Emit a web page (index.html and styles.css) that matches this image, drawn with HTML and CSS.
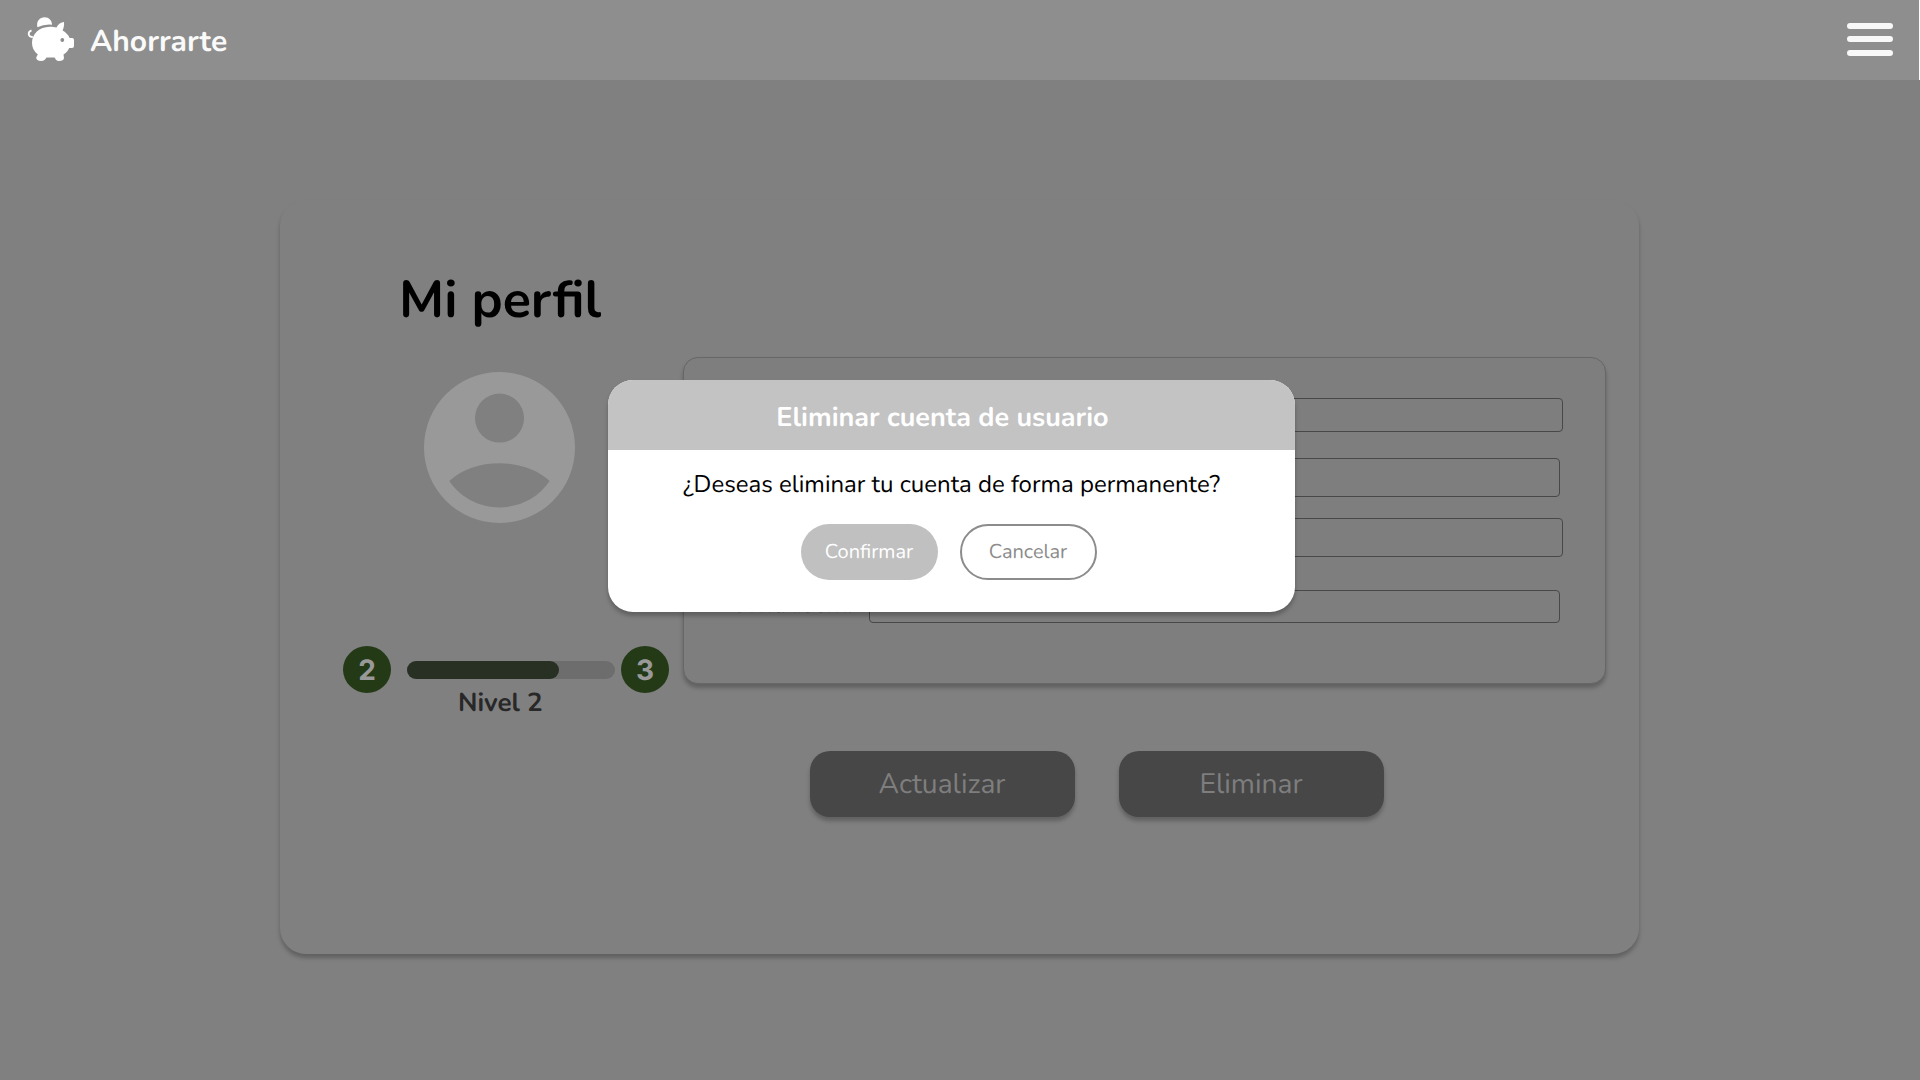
FILE: index.html
```html
<!DOCTYPE html>
<html lang="es">
<head>
<meta charset="utf-8">
<title>Ahorrarte</title>
<link rel="stylesheet" href="styles.css">
</head>
<body>
<header class="topbar">
  <div class="brand">
    <svg class="pig" viewBox="0 0 64 60" width="64" height="60" aria-hidden="true">
      <g fill="#fff">
        <path d="M17.400 17.200C16 11 20 7.300 24.500 7.300C29 7.300 32 10.500 32 14.700Q24 14 17.400 17.200Z"/>
        <path d="M12 33C12 24 19 17 30 16.800C32.500 16.800 34.500 17 36.500 17.600C38 14 41 12.200 44 12C44.400 15 43.600 18.500 42.600 20.500C46 22.500 48.500 25 49.600 28H52Q54 28 54 30V36Q54 38 52 38H49.200C48 41 46 43 43.500 44.500L44 48C44 50 41.500 51.200 38.500 51C36 51 35.500 48.800 34.500 47.600H26.500C25.500 49.500 24 51 21 51C18 50.800 16 49.500 16.200 47.500L17.800 44.500C14 41.500 12 37.500 12 33Z"/>
      </g>
      <path d="M12.800 27C8 27 7.200 22 11.500 20.300" fill="none" stroke="#fff" stroke-width="1.800"/>
      <circle cx="42.300" cy="30" r="1.900" fill="#8e8e8e"/>
    </svg>
    <span class="brand-name">Ahorrarte</span>
  </div>
  <div class="menu"><i></i><i></i><i></i></div>
</header>
<main class="page">
  <section class="panel">
    <div class="profile">
      <h1>Mi perfil</h1>
      <svg class="avatar" viewBox="2 2 20 20" width="151" height="151" aria-hidden="true">
        <path fill="#999" fill-rule="evenodd" d="M12 2a10 10 0 1 0 0 20a10 10 0 0 0 0-20ZM12 4.850a3.250 3.250 0 1 1 0 6.500a3.250 3.250 0 0 1 0-6.500ZM5.350 16.450C8.600 13.300 15.400 13.300 18.650 16.450C15.500 21.100 8.500 21.100 5.350 16.450Z"/>
      </svg>
      <div class="level">
        <b class="badge">2</b>
        <div class="track"><div class="fill" style="width:73.2%"></div></div>
        <b class="badge">3</b>
      </div>
      <p class="level-name">Nivel 2</p>
    </div>
    <div class="details">
      <form class="card">
        <span class="field f1"></span>
        <span class="field f2"></span>
        <span class="field f3"></span>
        <div class="row"><label>Contraseña</label><span class="field f4"></span></div>
      </form>
      <div class="actions">
        <button class="action">Actualizar</button>
        <button class="action">Eliminar</button>
      </div>
    </div>
  </section>
</main>
<div class="modal">
  <h2>Eliminar cuenta de usuario</h2>
  <p>¿Deseas eliminar tu cuenta de forma permanente?</p>
  <div class="choices">
    <button class="choice confirm">Confirmar</button>
    <button class="choice cancel">Cancelar</button>
  </div>
</div>
</body>
</html>
```
FILE: styles.css
```css
* { box-sizing: border-box; margin: 0; padding: 0; }
body { width: 1920px; height: 1080px; overflow: hidden; background: #808080; font-family: Nunito, Lato, "Open Sans", sans-serif; text-rendering: geometricPrecision; }
button { font: inherit; border: 0; text-rendering: inherit; }
.topbar { width: 1919px; height: 80px; background: #8e8e8e; display: flex; justify-content: space-between; align-items: flex-start; padding: 10px 26px 0 20px; box-shadow: 1px 0 #fff; }
.brand { display: flex; }
.brand-name { margin-left: 6px; padding-top: 13px; font-size: 30px; line-height: 38px; font-weight: 700; color: #fafafa; }
.menu { display: flex; flex-direction: column; padding-top: 13px; }
.menu i { width: 46px; height: 6px; border-radius: 3px; background: #f8f8f8; margin-bottom: 7px; }
.menu i + i { margin-bottom: 8px; }
.page { padding: 120px 0 0 280px; }
.panel { width: 1359px; height: 754px; border-radius: 26px; background: #808080; box-shadow: 0 4px 4px rgba(0,0,0,.25); display: flex; }
.profile { width: 403px; }
h1 { height: 135px; padding: 65px 0 0 119px; font-size: 52px; line-height: 72px; font-weight: 700; color: #000; white-space: nowrap; }
.avatar { display: block; margin: 36.5px 0 0 144px; }
.level { display: flex; align-items: center; margin: 123.5px 0 0 63px; height: 47px; }
.badge { width: 48px; height: 47px; border-radius: 50%; background: #243a17; color: #999; font: 700 28px/48px Inter, sans-serif; text-align: center; }
.track { width: 208px; height: 18px; margin: 0 6px 0 16px; border-radius: 9px; background: #6d6d6d; }
.fill { height: 18px; border-radius: 9px; background: #273023; }
.level-name { margin: -7px 0 0 178px; font-size: 26px; line-height: 36px; font-weight: 700; color: #282828; white-space: nowrap; }
.details { padding-top: 157px; }
.card { width: 923px; height: 327px; border: 1px solid #676767; border-radius: 15px; background: #7e7e7e; box-shadow: 0 4px 4px rgba(0,0,0,.25); padding: 40px 0 0 185px; }
.field { display: block; border: 1px solid #484848; border-radius: 4px; }
.f1 { width: 694px; height: 34px; }
.f2 { width: 691px; height: 39px; margin-top: 26px; }
.f3 { width: 694px; height: 39px; margin-top: 21px; }
.row { display: flex; margin: 33px 0 0 -139px; }
.row label { width: 139px; font-size: 24px; line-height: 31px; color: #282828; }
.f4 { width: 691px; height: 33px; }
.actions { display: flex; gap: 44px; padding: 67px 0 0 127px; }
.action { width: 265px; height: 66px; padding: 0 1px 1px 0; border-radius: 20px; background: #474747; color: #7e7e7e; font-size: 28.2px; box-shadow: 0 4px 4px rgba(0,0,0,.25); }
.modal { position: absolute; left: 608px; top: 380px; width: 687px; height: 232px; border-radius: 25px; background: #fff; overflow: hidden; box-shadow: 0 4px 4px rgba(0,0,0,.25); text-align: center; }
h2 { height: 70px; background: #c3c3c3; color: #fff; font-size: 27px; line-height: 75px; font-weight: 700; padding-right: 18px; }
.modal p { font-size: 24px; line-height: 32px; padding-top: 19px; color: #000; }
.choices { display: flex; gap: 22px; padding: 23px 0 0 193px; }
.choice { width: 137px; height: 56px; padding: 1px 1px 0 0; border-radius: 28px; font-size: 20px; }
.confirm { background: #c0c0c0; color: #fff; }
.cancel { background: #fff; border: 2px solid #8c8c8c; color: #8c8c8c; }
```
